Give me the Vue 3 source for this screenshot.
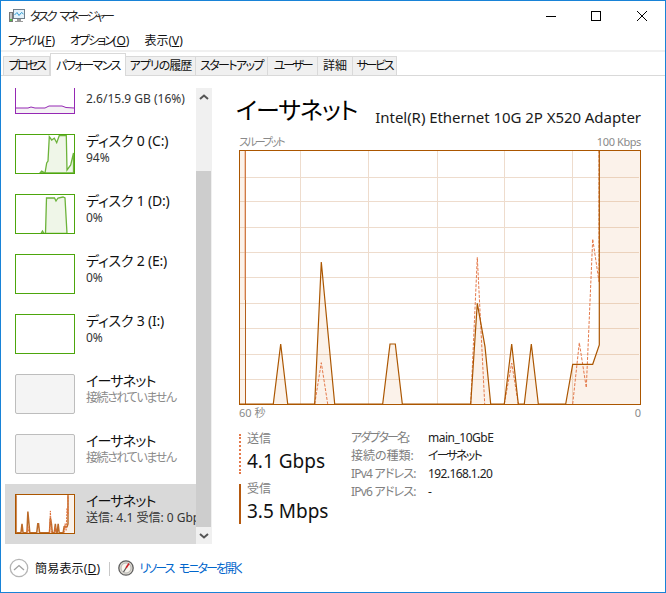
<script setup>
const tabs = [
  { label: 'プロセス', w: 47, ls: -2.2 },
  { label: 'パフォーマンス', w: 76, ls: -1.5, active: true },
  { label: 'アプリの履歴', w: 70, ls: -1 },
  { label: 'スタートアップ', w: 72, ls: -1.6 },
  { label: 'ユーザー', w: 50, ls: -2.2 },
  { label: '詳細', w: 35, ls: 0 },
  { label: 'サービス', w: 44, ls: -2.2 }
]
const recvLine = 'M240 404H273.3L280.7 344L287.7 404H314.7L321.3 262L334.7 404H382.7L390 344H395.3L402.3 404H470.7L477.3 303.3L485 346.7L490.7 404H504.3L511.7 344L518.3 404H524.3L531.3 344L538.3 404H565.7L572.7 364.3H592.7L599.3 345V151'
const recvFill = recvLine + 'H640V404Z'
const sendLine = 'M314.7 404L321.3 362.7L327.7 404M470.7 404L477.3 257.3L484.7 404M504.3 404L511.7 363L518.3 404M572.7 404L579.3 342.7L586.3 387.7L592.7 239L599 281.7V151'
const vGrid = [300, 368, 437, 504, 572]
const hGrid = [177, 201, 227, 252, 277, 303, 328, 354, 379]
const details = [
  { k: 'アダプター名:', v: 'main_10GbE', kls: -1.9, vls: -0.5 },
  { k: '接続の種類:', v: 'イーサネット', kls: 0, vls: -1.8 },
  { k: 'IPv4 アドレス:', v: '192.168.1.20', kls: -0.8, vls: -0.6 },
  { k: 'IPv6 アドレス:', v: '-', kls: -0.8, vls: 0 }
]
const items = [
  { id: 'mem', title: '', sub: '2.6/15.9 GB (16%)', kind: 'mem' },
  { id: 'd0', title: 'ディスク 0 (C:)', sub: '94%', kind: 'disk',
    path: 'M24 38L25.7 36L29 38L30.7 28L32 26L33.3 1.7L35.7 5L38.3 3.3L40.7 7.7L43.3 0.5H50.3L51 35L54.7 30L57.5 18V38H24Z' },
  { id: 'd1', title: 'ディスク 1 (D:)', sub: '0%', kind: 'disk',
    path: 'M25 38.5L26.5 36L28 38.5H29.5L30.5 3H38.5L40 6L42 3L47 2L49 3L51 38.5Z' },
  { id: 'd2', title: 'ディスク 2 (E:)', sub: '0%', kind: 'disk', path: '' },
  { id: 'd3', title: 'ディスク 3 (I:)', sub: '0%', kind: 'disk', path: '' },
  { id: 'e1', title: 'イーサネット', sub: '接続されていません', kind: 'off' },
  { id: 'e2', title: 'イーサネット', sub: '接続されていません', kind: 'off' },
  { id: 'e3', title: 'イーサネット', sub: '送信: 4.1 受信: 0 Gbps', kind: 'eth' }
]
</script>

<template>
  <div class="win">
    <div class="titlebar">
      <svg class="appicon" width="16" height="16" viewBox="0 0 16 16">
        <rect x="0.5" y="4.5" width="3" height="9" fill="#c4c4c4" stroke="#777" />
        <rect x="1" y="11" width="2" height="2" fill="#4fb848" />
        <rect x="4.5" y="1.5" width="11" height="9" fill="#e4f2fb" stroke="#6f7f8c" />
        <path d="M5.5 7L8 4.5L10 7.5L12.5 4.5L14.5 6" fill="none" stroke="#2e9ad0" />
        <path d="M8 11h4v2h2v1H6v-1h2z" fill="#9a9a9a" />
      </svg>
      <span class="apptitle">タスク マネージャー</span>
      <div class="winbtns">
        <svg width="46" height="29" viewBox="0 0 46 29"><path d="M19 15.5H29" stroke="#000" /></svg>
        <svg width="46" height="29" viewBox="0 0 46 29"><rect x="18.5" y="10.5" width="9" height="9" fill="none" stroke="#000" /></svg>
        <svg width="46" height="29" viewBox="0 0 46 29"><path d="M18 10L28 20M28 10L18 20" stroke="#000" /></svg>
      </div>
    </div>

    <div class="menubar">
      <span><span class="kana">ファイル</span>(<u>F</u>)</span>
      <span><span class="kana">オプション</span>(<u>O</u>)</span>
      <span>表示(<u>V</u>)</span>
    </div>

    <div class="tabstrip">
      <div
        v-for="t in tabs"
        :key="t.label"
        class="tab"
        :class="{ active: t.active }"
        :style="{ width: t.w + 'px', letterSpacing: t.ls + 'px' }"
      >{{ t.label }}</div>
    </div>

    <div class="body">
      <div class="sidebar">
        <div class="list">
          <div
            v-for="it in items"
            :key="it.id"
            class="item"
            :class="['k-' + it.kind]"
          >
            <div class="thumb">
              <svg v-if="it.kind === 'mem'" width="58" height="38" viewBox="0 0 58 38">
                <path d="M0 33L12 33L15 32L19 33L29 33L33 31L46 31L50 32.5L58 33V38H0Z" fill="#f4f2f4" stroke="none" />
                <path d="M0 33L12 33L15 32L19 33L29 33L33 31L46 31L50 32.5L58 33" fill="none" stroke="#9528b4" />
              </svg>
              <svg v-else-if="it.kind === 'disk' && it.path" width="58" height="38" viewBox="0 0 58 38">
                <path :d="it.path" fill="#eff6e8" stroke="#6cb33a" stroke-width="1.3" />
              </svg>
              <svg v-else-if="it.kind === 'eth'" width="58" height="38" viewBox="239 150 402 256" preserveAspectRatio="none">
                <path d="M240 151H245V404H240Z" fill="#d36f16" fill-opacity="0.09" />
                <path :d="recvFill" fill="#d36f16" fill-opacity="0.09" stroke="none" />
                <path d="M241 151V404" stroke="#cf8a55" stroke-width="1.5" vector-effect="non-scaling-stroke" />
                <path :d="recvLine" fill="none" stroke="#bb6a28" stroke-width="1.5" vector-effect="non-scaling-stroke" />
                <path :d="sendLine" fill="none" stroke="#e0703a" stroke-dasharray="2 1" vector-effect="non-scaling-stroke" />
              </svg>
            </div>
            <div class="itemtext">
              <div v-if="it.title" class="ititle">{{ it.title }}</div>
              <div class="isub">{{ it.sub }}</div>
            </div>
          </div>
        </div>
        <div class="scrollbar">
          <div class="sbtn">
            <svg width="10" height="6" viewBox="0 0 10 6"><path d="M1 5L5 1.5L9 5" fill="none" stroke="#555" stroke-width="2" /></svg>
          </div>
          <div class="track-top"></div>
          <div class="sthumb"></div>
          <div class="sbtn down">
            <svg width="10" height="6" viewBox="0 0 10 6"><path d="M1 1L5 4.5L9 1" fill="none" stroke="#555" stroke-width="2" /></svg>
          </div>
        </div>
      </div>

      <div class="pane">
        <div class="head">
          <span class="h1">イーサネット</span>
          <span class="adapter">Intel(R) Ethernet 10G 2P X520 Adapter</span>
        </div>
        <div class="axis top"><span class="thru">スループット</span><span class="kbps">100 Kbps</span></div>
        <svg class="graph" width="402" height="256" viewBox="239 150 402 256">
          <path v-for="x in vGrid" :key="'v' + x" :d="`M${x + 0.5} 151V404`" stroke="#eedccd" />
          <path v-for="y in hGrid" :key="'h' + y" :d="`M240 ${y + 0.5}H639`" stroke="#eedccd" />
          <path d="M240 151H245.5V404H240Z" fill="#d36f16" fill-opacity="0.09" />
          <path :d="recvFill" fill="#d36f16" fill-opacity="0.09" stroke="none" />
          <path d="M245.5 151V404" stroke="#b45f1c" />
          <path d="M245 151V300" stroke="#e89a70" />
          <path :d="sendLine" fill="none" stroke="#e4794a" stroke-dasharray="3 1.5" />
          <path :d="recvLine" fill="none" stroke="#ab5600" stroke-width="1.2" />
          <rect x="239.5" y="150.5" width="401" height="254" fill="none" stroke="#ab5600" />
        </svg>
        <div class="axis bottom"><span>60 秒</span><span>0</span></div>

        <div class="stats">
          <div class="speeds">
            <div class="speed send">
              <div class="slabel">送信</div>
              <div class="svalue">4.1 Gbps</div>
            </div>
            <div class="speed recv">
              <div class="slabel">受信</div>
              <div class="svalue">3.5 Mbps</div>
            </div>
          </div>
          <div class="details">
            <template v-for="d in details" :key="d.k">
              <div class="dk" :style="{ letterSpacing: d.kls + 'px' }">{{ d.k }}</div>
              <div class="dv" :style="{ letterSpacing: d.vls + 'px' }">{{ d.v }}</div>
            </template>
          </div>
        </div>
      </div>
    </div>

    <div class="footer">
      <svg class="collapse" width="20" height="20" viewBox="0 0 20 20">
        <circle cx="10" cy="10" r="8.7" fill="#fff" stroke="#b4b4b4" stroke-width="1.3" />
        <path d="M5 12L10 7.5L15 12" fill="none" stroke="#a0a0a0" stroke-width="1.3" />
      </svg>
      <span class="simple">簡易表示(<u>D</u>)</span>
      <span class="divider"></span>
      <svg class="resmon" width="16" height="16" viewBox="0 0 16 16">
        <circle cx="8" cy="8" r="7.2" fill="#dedad2" stroke="#5f5f5f" stroke-width="1.3" />
        <circle cx="8" cy="8" r="5" fill="#f8f5ee" stroke="#a8a8a8" stroke-width="0.8" />
        <path d="M11 3.5L8 8" stroke="#cc2027" stroke-width="1.6" />
        <path d="M8 8L5.5 12" stroke="#555" stroke-width="1.2" />
      </svg>
      <span class="link">リソース モニターを開く</span>
    </div>
  </div>
</template>

<style>
html, body { margin: 0; padding: 0; background: #fff; }
</style>

<style scoped>
.win {
  box-sizing: border-box;
  width: 666px;
  height: 593px;
  border: 1px solid #1883d7;
  background: #fff;
  display: flex;
  flex-direction: column;
  overflow: hidden;
  font-family: "Noto Sans", "Noto Sans CJK JP", sans-serif;
  font-feature-settings: "palt";
  color: #1a1a1a;
  font-size: 12px;
}
u { text-underline-offset: 1px; }
.kana { letter-spacing: -2px; }
.titlebar { height: 29px; display: flex; align-items: center; flex: none; }
.appicon { margin-left: 8px; margin-top: 1px; }
.apptitle { margin-left: 5px; font-size: 12px; letter-spacing: -2.2px; word-spacing: 3px; color: #222; }
.winbtns { margin-left: auto; display: flex; }
.winbtns svg { display: block; }
.menubar {
  height: 20px; flex: none;
  display: flex; align-items: center; gap: 15px;
  padding-left: 7px;
  font-size: 12px;
  color: #111;
}
.tabstrip {
  flex: none;
  height: 26px;
  box-sizing: border-box;
  border-top: 2px solid #f0f0f0;
  border-bottom: 1px solid #d9d9d9;
  display: flex;
  align-items: flex-end;
  padding-left: 2px;
}
.tab {
  box-sizing: border-box;
  height: 19px;
  background: #f0f0f0;
  border: 1px solid #d9d9d9;
  border-bottom: none;
  border-left: none;
  text-align: center;
  font-size: 12px;
  line-height: 18px;
  color: #111;
  white-space: nowrap;
}
.tab:first-child { border-left: 1px solid #d9d9d9; }
.tab.active {
  background: #fff;
  height: 23px;
  margin-bottom: -1px;
  border-left: 1px solid #d9d9d9;
  line-height: 23px;
}
.body { flex: 1; min-height: 0; display: flex; }
.sidebar {
  flex: none;
  width: 211px;
  box-sizing: border-box;
  padding: 12px 0 0 4px;
  height: 468px;
  display: flex;
}
.list { width: 191px; height: 456px; overflow: hidden; }
.item {
  height: 60px;
  box-sizing: border-box;
  padding: 10px 0 0 10px;
  display: flex;
  white-space: nowrap;
}
.k-mem { margin-top: -24px; }
.k-eth { background: #d9d9d9; }
.thumb {
  flex: none;
  width: 58px;
  height: 38px;
  border: 1px solid #4da60c;
  background: #fff;
}
.thumb svg { display: block; }
.k-mem .thumb { border-color: #9528b4; }
.k-off .thumb { border-color: #bdbdbd; background: #f4f4f4; border-radius: 2px; }
.k-eth .thumb { border-color: #ab5600; }
.itemtext { margin-left: 11px; margin-top: -3px; flex: 1; min-width: 0; }
.ititle { font-size: 14px; line-height: 20px; color: #111; letter-spacing: -0.2px; }
.k-off .ititle, .k-eth .ititle { letter-spacing: -0.8px; }
.isub { font-size: 12px; line-height: 16px; margin-top: -1px; color: #333; }
.k-mem .itemtext { padding-top: 21px; }
.k-eth .isub { overflow: hidden; }
.k-off .isub { color: #8a8a8a; letter-spacing: -1.4px; }
.scrollbar {
  flex: none;
  width: 16px;
  height: 456px;
  background: #f0f0f0;
  display: flex;
  flex-direction: column;
}
.sbtn { height: 17px; flex: none; display: flex; align-items: center; justify-content: center; }
.track-top { height: 66px; flex: none; }
.sthumb { flex: 1; background: #cdcdcd; margin-right: 1px; }
.pane {
  flex: none;
  width: 402px;
  margin-left: 27px;
}
.head { height: 56px; display: flex; align-items: flex-end; justify-content: space-between; padding-bottom: 4px; box-sizing: border-box; }
.h1 { font-size: 24px; line-height: 36px; color: #000; margin-left: -3px; letter-spacing: -1px; }
.adapter { font-size: 15px; line-height: 24px; color: #1a1a1a; margin-bottom: -1px; white-space: nowrap; letter-spacing: -0.05px; }
.axis { display: flex; justify-content: space-between; font-size: 11px; color: #8a8a8a; }
.axis.top { height: 18px; line-height: 20px; }
.axis.bottom { height: 14px; line-height: 14px; }
.thru { letter-spacing: -2.2px; }
.kbps { letter-spacing: -0.4px; }
.graph { display: block; }
.stats { display: flex; margin-top: 14px; }
.speeds { width: 112px; flex: none; display: flex; flex-direction: column; gap: 10px; }
.speed { box-sizing: border-box; padding-left: 6px; height: 40px; }
.speed.send { border-left: 2px dotted #e4794a; }
.speed.recv { border-left: 2px solid #b5590f; }
.slabel { font-size: 12px; line-height: 14px; color: #808080; margin-top: -2px; }
.svalue { font-size: 19px; line-height: 26px; color: #111; margin-top: 2px; white-space: nowrap; }
.details {
  display: grid;
  grid-template-columns: 77px auto;
  grid-auto-rows: 18px;
  align-content: start;
  line-height: 18px;
  margin-top: -5px;
  font-size: 12px;
}
.dk { color: #808080; white-space: nowrap; }
.dv { color: #222; white-space: nowrap; }
.footer { flex: none; height: 47px; display: flex; align-items: center; padding-left: 8px; }
.collapse { flex: none; margin-top: -2px; }
.simple { margin-left: 6px; font-size: 12px; color: #111; margin-top: -1px; letter-spacing: 0.2px; }
.divider { width: 1px; height: 14px; background: #c8c8c8; margin-left: 9px; }
.resmon { margin-left: 8px; margin-top: -1px; }
.link { margin-left: 5px; color: #0066cc; font-size: 12px; margin-top: -1px; letter-spacing: -1.9px; word-spacing: 4px; }
</style>
